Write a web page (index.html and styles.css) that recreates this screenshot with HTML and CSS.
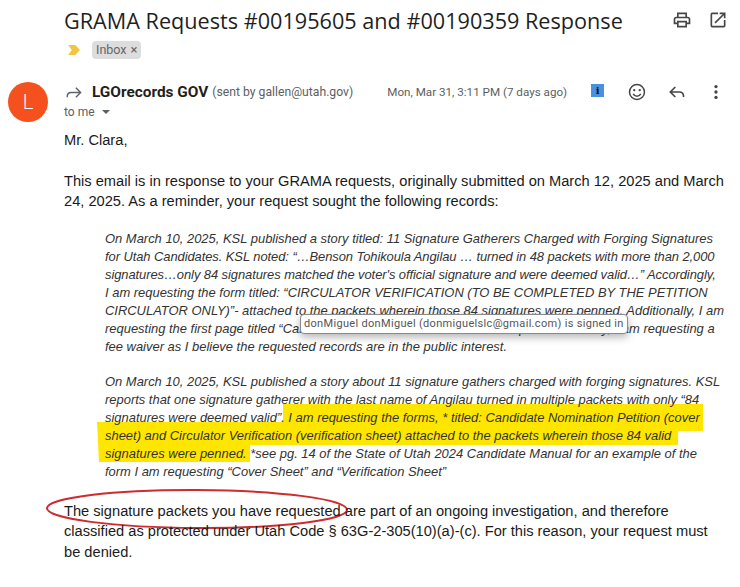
FILE: index.html
```html
<!DOCTYPE html>
<html lang="en">
<head>
    <meta charset="UTF-8">
    <title>GRAMA Requests Response</title>
    <link rel="stylesheet" href="styles.css">
</head>
<body>
    <div class="subject">
        <h1>GRAMA Requests #00195605 and #00190359 Response</h1>
        <div class="subject-icons">
            <svg class="icon" viewBox="0 0 24 24"><path d="M19 8h-1V3H6v5H5c-1.66 0-3 1.34-3 3v6h4v4h12v-4h4v-6c0-1.66-1.34-3-3-3zM8 5h8v3H8V5zm8 12v2H8v-4h8v2zm2-2v-2H6v2H4v-4c0-.55.45-1 1-1h14c.55 0 1 .45 1 1v4h-2z"/></svg>
            <svg class="icon" viewBox="0 0 24 24"><path d="M19 19H5V5h7V3H5a2 2 0 00-2 2v14a2 2 0 002 2h14c1.1 0 2-.9 2-2v-7h-2v7zM14 3v2h3.59l-9.83 9.83 1.41 1.41L19 6.41V10h2V3h-7z"/></svg>
        </div>
    </div>
    <div class="labels">
        <svg class="marker" viewBox="0 0 14 11"><path d="M0 0h8l5 5.5L8 11H0l4-5.5z"/></svg>
        <span class="chip">Inbox<span class="chip-x">×</span></span>
    </div>

    <div class="message">
        <div class="avatar">L</div>
        <div class="message-main">
            <div class="sender-row">
                <svg class="forward" viewBox="0 0 24 24"><path d="M15 6l6 6-6 6M21 12H9c-3 0-5 2-5 6"/></svg>
                <strong class="sender">LGOrecords GOV</strong>
                <span class="sent-by">(sent by gallen@utah.gov)</span>
                <span class="date">Mon, Mar 31, 3:11 PM (7 days ago)</span>
                <span class="info-badge">i</span>
                <svg class="icon icon-smile" viewBox="0 0 24 24"><circle cx="12" cy="12" r="9"/><circle class="dot" cx="8.7" cy="9.8" r="1.4"/><circle class="dot" cx="15.3" cy="9.8" r="1.4"/><path d="M7.5 14.2c1 1.9 2.6 2.8 4.5 2.8s3.500-.9 4.500-2.800"/></svg>
                <svg class="icon icon-reply" viewBox="0 0 24 24"><path d="M10 6l-6 6 6 6M4 12h11c3 0 5 2 5 6"/></svg>
                <svg class="icon icon-more" viewBox="0 0 24 24"><circle cx="12" cy="5.500" r="2"/><circle cx="12" cy="12" r="2"/><circle cx="12" cy="18.500" r="2"/></svg>
            </div>
            <div class="to-me">to me <span class="caret"></span></div>
        </div>
    </div>

    <div class="body-text">
        <p class="greeting">Mr. Clara,</p>
        <p>This email is in response to your GRAMA requests, originally submitted on March 12, 2025 and March<br>24, 2025. As a reminder, your request sought the following records:</p>

        <div class="quotes">
            <p>On March 10, 2025, KSL published a story titled: 11 Signature Gatherers Charged with Forging Signatures<br>
            <span class="tight-line">for Utah Candidates. KSL noted: “…Benson Tohikoula Angilau … turned in 48 packets with more than 2,000</span><br>
            <span class="tight-line">signatures…only 84 signatures matched the voter's official signature and were deemed valid…” Accordingly,</span><br>
            I am requesting the form titled: “CIRCULATOR VERIFICATION (TO BE COMPLETED BY THE PETITION<br>
            CIRCULATOR ONLY)”- attached to the packets wherein those 84 signatures were penned. Additionally, I am<br>
            requesting the first page titled “Candidate Nomination Petition” for those packets. Finally, I am requesting a<br>
            fee waiver as I believe the requested records are in the public interest.</p>

            <div class="highlighted">
                <svg class="marker-ink" viewBox="0 0 640 64">
                    <path d="M184 0L604 0V27H579V41H151V58L0 58L-2 18L1 18H184z"/>
                </svg>
                <p>On March 10, 2025, KSL published a story about 11 signature gathers charged with forging signatures. KSL<br>
                reports that one signature gatherer with the last name of Angilau turned in multiple packets with only “84<br>
                signatures were deemed valid”. I am requesting the forms, * titled: Candidate Nomination Petition (cover<br>
                sheet) and Circulator Verification (verification sheet) attached to the packets wherein those 84 valid<br>
                signatures were penned. *see pg. 14 of the State of Utah 2024 Candidate Manual for an example of the<br>
                form I am requesting “Cover Sheet” and “Verification Sheet”</p>
            </div>
        </div>

        <div class="closing">
            <svg class="circled" viewBox="0 0 304 42"><ellipse cx="152" cy="21" rx="150" ry="19" transform="rotate(0.300 152 21)"/></svg>
            <p>The signature packets you have requested are part of an ongoing investigation, and therefore<br>
            classified as protected under Utah Code § 63G-2-305(10)(a)-(c). For this reason, your request must<br>
            be denied.</p>
        </div>

        <div class="signed-in">donMiguel donMiguel (donmiguelslc@gmail.com) is signed in</div>
    </div>
</body>
</html>
```

FILE: styles.css
```css
html, body {
    margin: 0;
    height: 587px;
    overflow: hidden;
}
body {
    font-family: "Liberation Sans", Arial, sans-serif;
    background-color: #fff;
    color: #1f1f1f;
    position: relative;
}
p {
    margin: 0;
}
.icon {
    width: 20px;
    height: 20px;
    fill: #444746;
    display: block;
}

/* Assunto */
.subject {
    display: flex;
    justify-content: space-between;
    align-items: center;
    padding: 5px 12px 0 64px;
    height: 30px;
}
h1 {
    margin: 0;
    font-family: "Open Sans", sans-serif;
    font-weight: 400;
    font-size: 21.650px;
    color: #1f1f1f;
    white-space: nowrap;
}
.subject-icons {
    display: flex;
    gap: 16px;
}
.labels {
    display: flex;
    align-items: center;
    gap: 11px;
    padding: 3px 0 0 68px;
    height: 23px;
}
.marker {
    width: 13px;
    height: 10px;
    fill: #f4c542;
}
.chip {
    background-color: #dddddd;
    border-radius: 4px;
    padding: 0 4px;
    font-family: Roboto, sans-serif;
    font-size: 12.500px;
    line-height: 18px;
    color: #666;
}
.chip-x {
    margin-left: 4px;
    font-size: 13px;
}

/* Cabecalho da mensagem */
.message {
    display: flex;
    padding: 21px 0 0 8px;
}
.avatar {
    width: 40px;
    height: 40px;
    border-radius: 50%;
    background-color: #f4511e;
    color: #fff;
    font-family: Roboto, sans-serif;
    font-size: 20px;
    font-weight: 300;
    line-height: 40px;
    text-align: center;
    flex: none;
}
.message-main {
    margin-left: 16px;
    width: 662px;
}
.sender-row {
    display: flex;
    align-items: center;
    height: 20px;
}
.forward {
    width: 19px;
    height: 19px;
    fill: none;
    stroke: #5f6368;
    stroke-width: 1.800;
    flex: none;
}
.sender {
    margin-left: 9px;
    font-family: Roboto, sans-serif;
    font-size: 15.400px;
    color: #1f1f1f;
    white-space: nowrap;
}
.sent-by {
    margin-left: 4px;
    font-family: Roboto, sans-serif;
    font-size: 12.200px;
    color: #5e5e5e;
    white-space: nowrap;
}
.date {
    margin-left: 34px;
    font-family: Roboto, sans-serif;
    font-size: 11.650px;
    color: #5e5e5e;
    white-space: nowrap;
}
.info-badge {
    margin-left: 24px;
    width: 13px;
    height: 13px;
    background-color: #4a90e2;
    color: #111;
    font-family: "DejaVu Serif", serif;
    font-weight: bold;
    font-size: 10px;
    line-height: 13px;
    text-align: center;
    flex: none;
    margin-top: -3px;
}
.icon-smile {
    margin-left: 23px;
    fill: none;
    stroke: #444746;
    stroke-width: 1.800;
}
.icon-smile .dot {
    fill: #444746;
    stroke: none;
}
.icon-reply {
    margin-left: 20px;
    fill: none;
    stroke: #444746;
    stroke-width: 2;
}
.icon-more {
    margin-left: 19px;
}
.to-me {
    font-family: Roboto, sans-serif;
    font-size: 12px;
    line-height: 20px;
    color: #5e5e5e;
}
.caret {
    display: inline-block;
    margin-left: 4px;
    border-left: 4px solid transparent;
    border-right: 4px solid transparent;
    border-top: 4px solid #5e5e5e;
    vertical-align: 2px;
}

/* Corpo */
.body-text {
    padding: 8px 0 0 64px;
    font-size: 14.650px;
    line-height: 20.500px;
    color: #1a1a1a;
    white-space: nowrap;
}
.greeting {
    margin-bottom: 20px;
}
.quotes {
    margin: 18px 0 0 41px;
    font-size: 12.950px;
    font-style: italic;
    line-height: 18px;
    color: #333;
}
.tight-line {
    letter-spacing: -0.070px;
}
.highlighted {
    position: relative;
    margin-top: 17px;
}
.highlighted p {
    position: relative;
}
.marker-ink {
    position: absolute;
    left: -6px;
    top: 31px;
    width: 640px;
    height: 64px;
    fill: #ffe600;
    overflow: visible;
}
.closing {
    position: relative;
    margin-top: 20px;
}
.closing p {
    position: relative;
}
.circled {
    position: absolute;
    left: -19px;
    top: -13px;
    width: 304px;
    height: 42px;
    fill: none;
    stroke: #cf2a30;
    stroke-width: 2;
}
.signed-in {
    position: absolute;
    left: 300px;
    top: 314px;
    height: 20px;
    padding: 0 3px;
    box-sizing: border-box;
    border: 1px solid #8a8a8a;
    border-radius: 4px;
    background-color: #fff;
    box-shadow: 0 3px 8px rgba(0, 0, 0, 0.3);
    font-family: Roboto, sans-serif;
    font-size: 11px;
    letter-spacing: 0.320px;
    line-height: 18px;
    color: #555;
}
```
